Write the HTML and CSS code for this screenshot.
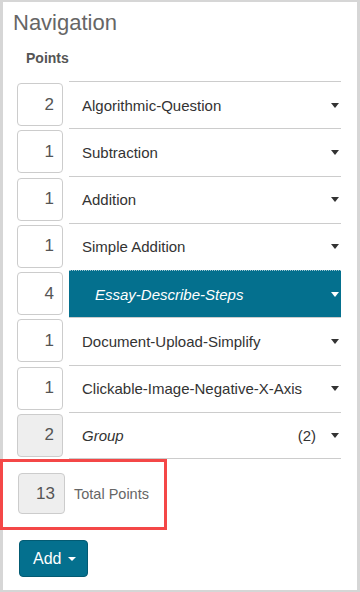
FILE: index.html
```html
<!DOCTYPE html>
<html lang="en">
<head>
    <meta charset="UTF-8">
    <meta name="viewport" content="width=device-width, initial-scale=1.0">
    <title>Navigation</title>
    <link rel="stylesheet" href="styles.css">
</head>
<body>
    <div class="panel">
        <h1>Navigation</h1>
        <div class="col-label">Points</div>

        <ul class="nav-list">
            <li class="nav-row">
                <input class="points" type="text" value="2">
                <div class="nav-item"><span class="nav-name">Algorithmic-Question</span><span class="caret"></span></div>
            </li>
            <li class="nav-row">
                <input class="points" type="text" value="1">
                <div class="nav-item"><span class="nav-name">Subtraction</span><span class="caret"></span></div>
            </li>
            <li class="nav-row">
                <input class="points" type="text" value="1">
                <div class="nav-item"><span class="nav-name">Addition</span><span class="caret"></span></div>
            </li>
            <li class="nav-row">
                <input class="points" type="text" value="1">
                <div class="nav-item"><span class="nav-name">Simple Addition</span><span class="caret"></span></div>
            </li>
            <li class="nav-row">
                <input class="points" type="text" value="4">
                <div class="nav-item selected"><span class="nav-name">Essay-Describe-Steps</span><span class="caret"></span></div>
            </li>
            <li class="nav-row">
                <input class="points" type="text" value="1">
                <div class="nav-item"><span class="nav-name">Document-Upload-Simplify</span><span class="caret"></span></div>
            </li>
            <li class="nav-row">
                <input class="points" type="text" value="1">
                <div class="nav-item"><span class="nav-name">Clickable-Image-Negative-X-Axis</span><span class="caret"></span></div>
            </li>
            <li class="nav-row">
                <input class="points readonly" type="text" value="2" readonly>
                <div class="nav-item group"><span class="nav-name">Group</span><span class="count">(2)</span><span class="caret"></span></div>
            </li>
        </ul>

        <div class="total">
            <input class="points total-box readonly" type="text" value="13" readonly>
            <span class="total-label">Total Points</span>
            <div class="highlight"></div>
        </div>

        <button class="btn-add">Add <span class="caret"></span></button>
    </div>
</body>
</html>
```

FILE: styles.css
```css
* {
    margin: 0;
    padding: 0;
    box-sizing: border-box;
    font-family: "Liberation Sans", Arial, sans-serif;
}

body {
    background-color: #fff;
    color: #333;
}

.panel {
    height: 592px;
    border: 2px solid #d6d6d6;
    border-left-width: 3px;
    border-right-width: 3px;
    padding: 0 16px 0 14px;
    background-color: #fff;
}

h1 {
    font-size: 22px;
    font-weight: normal;
    color: #666;
    line-height: 26px;
    padding-top: 8px;
    margin-left: -4px;
}

.col-label {
    font-size: 14px;
    font-weight: bold;
    color: #555;
    line-height: 16px;
    margin-top: 14px;
    margin-left: 9px;
    margin-bottom: 15px;
}

.nav-list {
    list-style: none;
}

.nav-row {
    display: flex;
    align-items: center;
    gap: 6px;
    height: 47.25px;
}

.points {
    width: 46px;
    height: 43px;
    border: 1px solid #ccc;
    border-radius: 4px;
    padding: 0 8px;
    font-size: 17px;
    color: #555;
    text-align: right;
    background-color: #fff;
    flex-shrink: 0;
}

.points.readonly {
    background-color: #eee;
}

.nav-item {
    flex: 1;
    align-self: stretch;
    display: flex;
    align-items: center;
    padding: 0 2px 0 13px;
    border-top: 1px solid #ccc;
    font-size: 15px;
    color: #333;
}

.nav-row:last-child .nav-item {
    border-bottom: 1px solid #ccc;
}

.nav-name {
    flex: 1;
}

.nav-item.selected {
    background-color: #04708e;
    color: #fff;
    font-style: italic;
    padding-left: 26px;
    border-top: 1px dotted #9cc4d1;
}

.nav-item.selected .caret {
    border-top-color: #fff;
}

.nav-item.group .nav-name {
    font-style: italic;
}

.count {
    margin-right: 15px;
}

.caret {
    display: inline-block;
    width: 0;
    height: 0;
    border-top: 5px solid #333;
    border-left: 4.5px solid transparent;
    border-right: 4.5px solid transparent;
}

.total {
    position: relative;
    display: flex;
    align-items: center;
    gap: 9px;
    height: 71px;
    padding-bottom: 2px;
}

.total-box {
    width: 47px;
    height: 41px;
    margin-left: 1px;
    font-size: 17px;
    padding-right: 9px;
}

.total-label {
    font-size: 14.5px;
    color: #666;
}

.highlight {
    position: absolute;
    left: -17px;
    top: 0;
    width: 167px;
    height: 71px;
    border: 3px solid #f44747;
}

.btn-add {
    margin-top: 10px;
    margin-left: 2px;
    width: 69px;
    height: 37px;
    background-color: #04708e;
    border: 1px solid #035b73;
    border-radius: 4px;
    color: #fff;
    font-size: 16px;
    padding-left: 2px;
    cursor: pointer;
}

.btn-add .caret {
    border-top-color: #fff;
    border-top-width: 4px;
    border-left-width: 4px;
    border-right-width: 4px;
    vertical-align: middle;
    margin-left: 2px;
}
```
